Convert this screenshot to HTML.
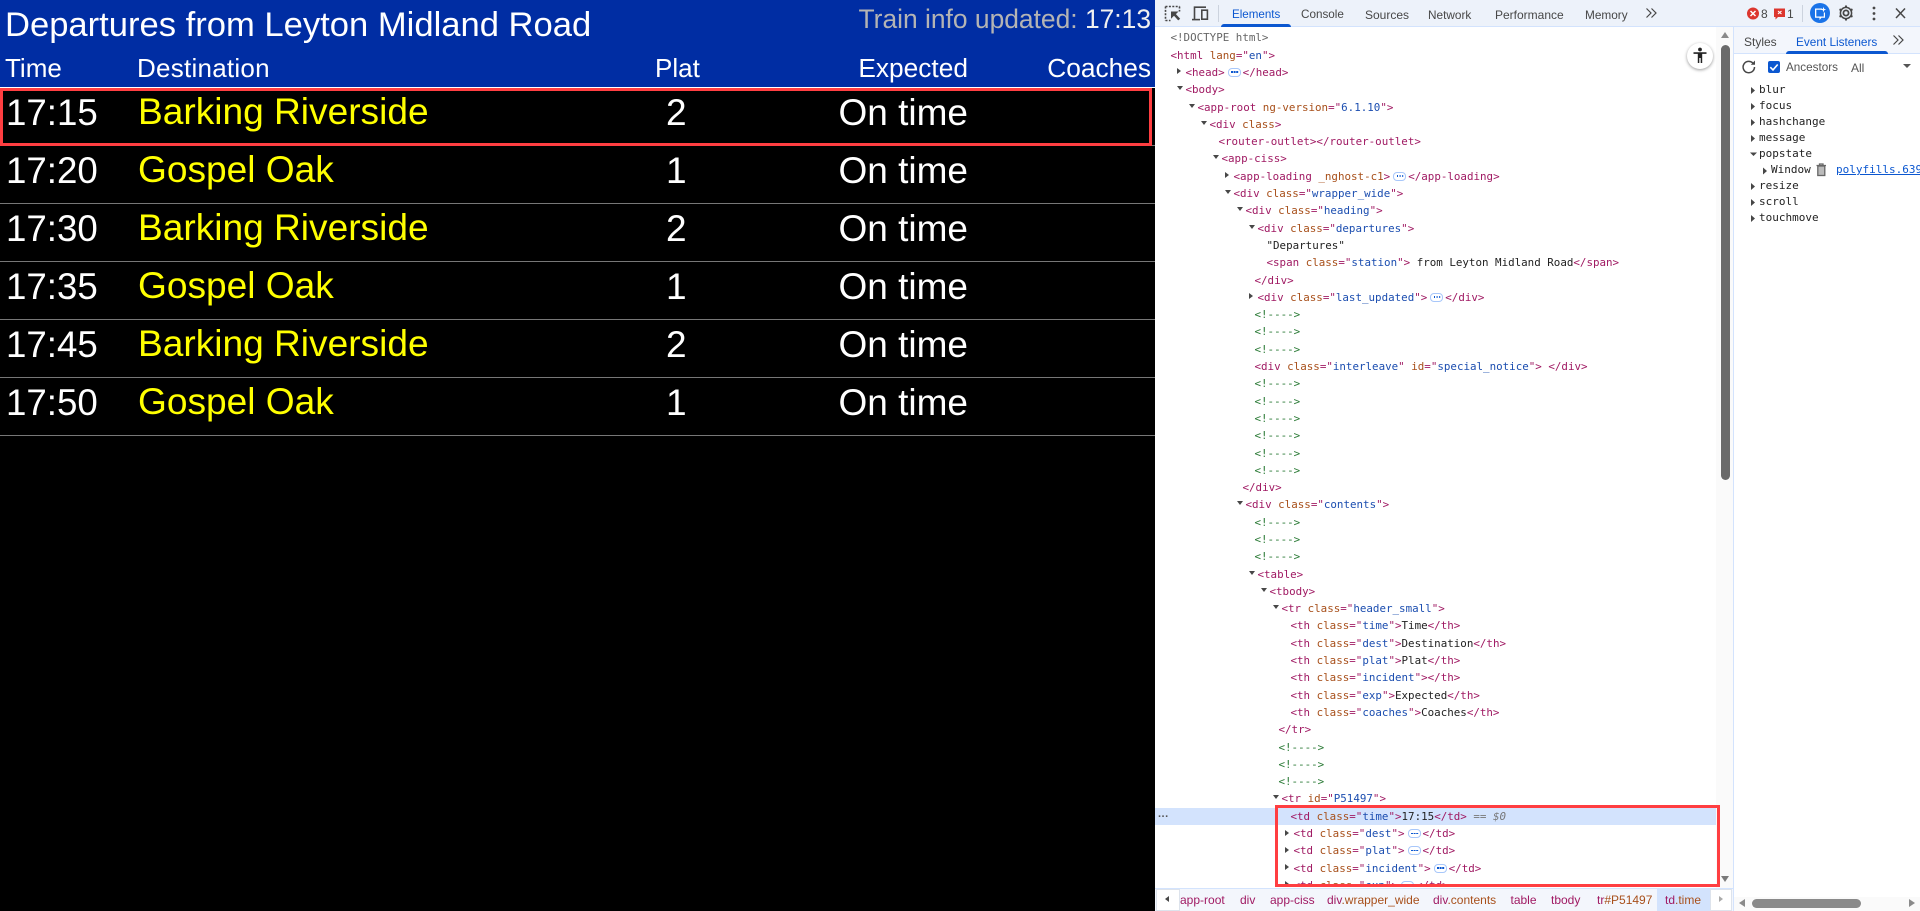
<!DOCTYPE html>
<html lang="en"><head><meta charset="utf-8"><title>Departures</title>
<style>
html,body{margin:0;padding:0;width:1920px;height:911px;overflow:hidden;background:#000}
body{position:relative;font-family:"Liberation Sans",sans-serif}
.abs,.s{position:absolute;white-space:nowrap}
.s{line-height:0}
.hdr{position:absolute;left:0;top:0;width:1155px;height:87px;background:#002da3;border-bottom:1px solid #fff}
.row{position:absolute;left:0;width:1155px;height:57px;border-bottom:1px solid #777}
.tm{left:6px;top:25px;font-size:36.7px;color:#fff}
.ds{left:138px;top:23px;font-size:37.1px;color:#ff0}
.pl{left:666px;top:25px;font-size:37px;color:#fff}
.ex{right:187px;top:25px;font-size:37px;color:#fff}
#dev{position:absolute;left:1155px;top:0;width:765px;height:911px;background:#fff;overflow:hidden}
.tb{position:absolute;left:1155px;top:0;width:765px;height:26px;background:#edf2fa;border-bottom:1px solid #d3e3fd}
.tab{position:absolute;font-size:12px;color:#474747;line-height:14px;white-space:nowrap}
#el{position:absolute;left:1155px;top:27px;width:578px;height:858px;overflow:hidden;background:#fff}
#in{position:absolute;left:-1155px;top:2.4px;width:1733px;font:10.85px/17.3px "DejaVu Sans Mono",monospace;color:#222}
.l{position:relative;height:17.3px;white-space:pre}
.t{color:#a01a63}.a{color:#a8501b}.v{color:#1c4eb0}.c{color:#2a7a35}.g{color:#666}.z{color:#777;font-style:italic}
.d,.r{position:absolute;width:0;height:0}
.d{left:-9px;top:5px;border-left:3.5px solid transparent;border-right:3.5px solid transparent;border-top:4.5px solid #474747}
.r{left:-8.5px;top:4.5px;border-top:3.5px solid transparent;border-bottom:3.5px solid transparent;border-left:4.5px solid #474747}
.e{display:inline-block;box-sizing:border-box;width:13px;height:9px;margin:0 2px 0 3px;border:1px solid #a8c7fa;border-radius:4px;vertical-align:-1px;position:relative;background:#fff}
.e:after{content:"";position:absolute;left:2.5px;top:2.5px;width:1.6px;height:1.6px;background:#0b57d0;box-shadow:2.6px 0 #0b57d0,5.2px 0 #0b57d0}
.m{position:absolute;font:11px/16px "DejaVu Sans Mono",monospace;color:#222;white-space:nowrap}
.bc{position:absolute;top:893px;font-size:12px;line-height:14px;white-space:nowrap;color:#a01a63}
.bc span{color:#a8501b}
</style></head><body>

<div class="hdr"></div>
<div class="s" style="left:5px;top:24.500px;font-size:34.6px;color:#fff">Departures from Leyton Midland Road</div>
<div class="s" style="right:769px;top:19px;font-size:26.4px;color:#b4b4b4">Train info updated: <span style="color:#f0f0f0">17:13</span></div>
<div class="s" style="left:5px;top:68px;font-size:26px;color:#fff">Time</div>
<div class="s" style="left:137px;top:68px;font-size:26px;letter-spacing:.25px;color:#fff">Destination</div>
<div class="s" style="left:655px;top:68px;font-size:26px;color:#fff">Plat</div>
<div class="s" style="right:952px;top:68px;font-size:26.3px;color:#fff">Expected</div>
<div class="s" style="right:769px;top:68px;font-size:26.3px;color:#fff">Coaches</div>

<div class="row" style="top:88px"><div class="s tm">17:15</div><div class="s ds">Barking Riverside</div><div class="s pl">2</div><div class="s ex">On time</div></div>
<div class="row" style="top:146px"><div class="s tm">17:20</div><div class="s ds">Gospel Oak</div><div class="s pl">1</div><div class="s ex">On time</div></div>
<div class="row" style="top:204px"><div class="s tm">17:30</div><div class="s ds">Barking Riverside</div><div class="s pl">2</div><div class="s ex">On time</div></div>
<div class="row" style="top:262px"><div class="s tm">17:35</div><div class="s ds">Gospel Oak</div><div class="s pl">1</div><div class="s ex">On time</div></div>
<div class="row" style="top:320px"><div class="s tm">17:45</div><div class="s ds">Barking Riverside</div><div class="s pl">2</div><div class="s ex">On time</div></div>
<div class="row" style="top:378px"><div class="s tm">17:50</div><div class="s ds">Gospel Oak</div><div class="s pl">1</div><div class="s ex">On time</div></div>
<div class="abs" style="left:0;top:88px;width:1152px;height:58px;box-sizing:border-box;border:3px solid #ff3e41"></div>

<div id="dev"></div>
<div class="tb"></div>
<svg class="abs" style="left:1155px;top:0" width="70" height="27" viewBox="0 0 70 27" fill="none">
<path d="M10.5 6.5h14M10.5 6.5v14M10.5 20.5h5M24.5 6.5v5" stroke="#474747" stroke-width="1.6" stroke-dasharray="2 1.4"/>
<path d="M16 11.5h7.5l-2.6 2.6 4.3 4.6-2 1.7-4.2-4.6-3 2.9z" fill="#474747"/>
<path d="M39.5 19V7.2h11.5" stroke="#474747" stroke-width="1.6"/>
<path d="M37 19.6h8" stroke="#474747" stroke-width="1.6"/>
<rect x="46.8" y="10.2" width="5.6" height="9" stroke="#474747" stroke-width="1.6"/>
<path d="M63.5 5v17" stroke="#ccd3de"/>
</svg>
<div class="abs" style="left:1221px;top:24px;width:70px;height:3px;background:#0b57d0;border-radius:3px 3px 0 0"></div>
<div class="tab" style="left:1232px;top:8px;color:#0b57d0;font-size:11.6px">Elements</div>
<div class="tab" style="left:1301px;top:8px;font-size:11.7px">Console</div>
<div class="tab" style="left:1365px;top:8px">Sources</div>
<div class="tab" style="left:1428px;top:8px;font-size:11.8px">Network</div>
<div class="tab" style="left:1495px;top:8px">Performance</div>
<div class="tab" style="left:1585px;top:8px;font-size:11.8px">Memory</div>
<svg class="abs" style="left:1645px;top:7px" width="13" height="12" fill="none" stroke="#474747" stroke-width="1.2"><path d="M1.5 1.5L6 6l-4.500 4.500M6.500 1.500L11 6l-4.500 4.500"/></svg>

<svg class="abs" style="left:1745px;top:6px" width="16" height="16"><circle cx="8" cy="7.500" r="6" fill="#dc362e"/><path d="M5.500 5l5 5M10.500 5l-5 5" stroke="#fff" stroke-width="1.500"/></svg>
<div class="tab" style="left:1761px;top:7px">8</div>
<svg class="abs" style="left:1773px;top:7px" width="14" height="14"><path d="M1 1.500h11v8.500H5l-2.500 2.500V10H1z" fill="#dc362e"/><path d="M5 4l3.500 3M8.500 4L5 7" stroke="#fff" stroke-width="1.100"/></svg>
<div class="tab" style="left:1787px;top:7px">1</div>
<div class="abs" style="left:1802px;top:5px;width:1px;height:17px;background:#ccd3de"></div>
<svg class="abs" style="left:1810px;top:3px" width="20" height="20"><circle cx="10" cy="10" r="10" fill="#1a73e8"/><path d="M6 5.500h6v1.200H6.300v6.800h7.500V9.500H15v5.200h-3.500L9.500 17v-2.300H5V5.500z" fill="#fff"/><path d="M13.500 4l.7 1.900 1.900.7-1.900.7-.7 1.900-.7-1.900-1.900-.7 1.900-.7z" fill="#fff"/></svg>
<svg class="abs" style="left:1838px;top:5px" width="16" height="16" viewBox="0 0 16 16"><circle cx="8" cy="8" r="2.600" fill="none" stroke="#474747" stroke-width="1.800"/><circle cx="8" cy="8" r="5.600" fill="none" stroke="#474747" stroke-width="1.500"/><path d="M8 .5v2.200M8 13.300v2.200M1.500 4.200l1.900 1.100M12.600 10.700l1.900 1.100M1.500 11.800l1.900-1.100M12.600 5.300l1.900-1.100" stroke="#474747" stroke-width="2"/></svg>
<svg class="abs" style="left:1871px;top:6px" width="6" height="15"><circle cx="3" cy="2" r="1.400" fill="#474747"/><circle cx="3" cy="7.500" r="1.400" fill="#474747"/><circle cx="3" cy="13" r="1.400" fill="#474747"/></svg>
<svg class="abs" style="left:1895px;top:8px" width="12" height="11"><path d="M1 .5l9 9.500M10 .5l-9 9.500" stroke="#474747" stroke-width="1.500"/></svg>

<div id="el"><div id="in">
<div class="l g" style="margin-left:1170.5px">&lt;!DOCTYPE html&gt;</div>
<div class="l" style="margin-left:1170.5px"><span class="t">&lt;html</span> <span class="a">lang</span><span class="t">="</span><span class="v">en</span><span class="t">"&gt;</span></div>
<div class="l" style="margin-left:1185.5px"><i class="r"></i><span class="t">&lt;head&gt;</span><b class="e"></b><span class="t">&lt;/head&gt;</span></div>
<div class="l" style="margin-left:1185.5px"><i class="d"></i><span class="t">&lt;body&gt;</span></div>
<div class="l" style="margin-left:1197.5px"><i class="d"></i><span class="t">&lt;app-root</span> <span class="a">ng-version</span><span class="t">="</span><span class="v">6.1.10</span><span class="t">"&gt;</span></div>
<div class="l" style="margin-left:1209.5px"><i class="d"></i><span class="t">&lt;div</span> <span class="a">class</span><span class="t">&gt;</span></div>
<div class="l" style="margin-left:1218.5px"><span class="t">&lt;router-outlet&gt;&lt;/router-outlet&gt;</span></div>
<div class="l" style="margin-left:1221.5px"><i class="d"></i><span class="t">&lt;app-ciss&gt;</span></div>
<div class="l" style="margin-left:1233.5px"><i class="r"></i><span class="t">&lt;app-loading</span> <span class="a">_nghost-c1</span><span class="t">&gt;</span><b class="e"></b><span class="t">&lt;/app-loading&gt;</span></div>
<div class="l" style="margin-left:1233.5px"><i class="d"></i><span class="t">&lt;div</span> <span class="a">class</span><span class="t">="</span><span class="v">wrapper_wide</span><span class="t">"&gt;</span></div>
<div class="l" style="margin-left:1245.5px"><i class="d"></i><span class="t">&lt;div</span> <span class="a">class</span><span class="t">="</span><span class="v">heading</span><span class="t">"&gt;</span></div>
<div class="l" style="margin-left:1257.5px"><i class="d"></i><span class="t">&lt;div</span> <span class="a">class</span><span class="t">="</span><span class="v">departures</span><span class="t">"&gt;</span></div>
<div class="l" style="margin-left:1266.5px">"Departures"</div>
<div class="l" style="margin-left:1266.5px"><span class="t">&lt;span</span> <span class="a">class</span><span class="t">="</span><span class="v">station</span><span class="t">"&gt;</span> from Leyton Midland Road<span class="t">&lt;/span&gt;</span></div>
<div class="l" style="margin-left:1254.5px"><span class="t">&lt;/div&gt;</span></div>
<div class="l" style="margin-left:1257.5px"><i class="r"></i><span class="t">&lt;div</span> <span class="a">class</span><span class="t">="</span><span class="v">last_updated</span><span class="t">"&gt;</span><b class="e"></b><span class="t">&lt;/div&gt;</span></div>
<div class="l c" style="margin-left:1254.5px">&lt;!----&gt;</div>
<div class="l c" style="margin-left:1254.5px">&lt;!----&gt;</div>
<div class="l c" style="margin-left:1254.5px">&lt;!----&gt;</div>
<div class="l" style="margin-left:1254.5px"><span class="t">&lt;div</span> <span class="a">class</span><span class="t">="</span><span class="v">interleave</span><span class="t">"</span> <span class="a">id</span><span class="t">="</span><span class="v">special_notice</span><span class="t">"&gt;</span> <span class="t">&lt;/div&gt;</span></div>
<div class="l c" style="margin-left:1254.5px">&lt;!----&gt;</div>
<div class="l c" style="margin-left:1254.5px">&lt;!----&gt;</div>
<div class="l c" style="margin-left:1254.5px">&lt;!----&gt;</div>
<div class="l c" style="margin-left:1254.5px">&lt;!----&gt;</div>
<div class="l c" style="margin-left:1254.5px">&lt;!----&gt;</div>
<div class="l c" style="margin-left:1254.5px">&lt;!----&gt;</div>
<div class="l" style="margin-left:1242.5px"><span class="t">&lt;/div&gt;</span></div>
<div class="l" style="margin-left:1245.5px"><i class="d"></i><span class="t">&lt;div</span> <span class="a">class</span><span class="t">="</span><span class="v">contents</span><span class="t">"&gt;</span></div>
<div class="l c" style="margin-left:1254.5px">&lt;!----&gt;</div>
<div class="l c" style="margin-left:1254.5px">&lt;!----&gt;</div>
<div class="l c" style="margin-left:1254.5px">&lt;!----&gt;</div>
<div class="l" style="margin-left:1257.5px"><i class="d"></i><span class="t">&lt;table&gt;</span></div>
<div class="l" style="margin-left:1269.5px"><i class="d"></i><span class="t">&lt;tbody&gt;</span></div>
<div class="l" style="margin-left:1281.500px"><i class="d"></i><span class="t">&lt;tr</span> <span class="a">class</span><span class="t">="</span><span class="v">header_small</span><span class="t">"&gt;</span></div>
<div class="l" style="margin-left:1290.5px"><span class="t">&lt;th</span> <span class="a">class</span><span class="t">="</span><span class="v">time</span><span class="t">"&gt;</span>Time<span class="t">&lt;/th&gt;</span></div>
<div class="l" style="margin-left:1290.5px"><span class="t">&lt;th</span> <span class="a">class</span><span class="t">="</span><span class="v">dest</span><span class="t">"&gt;</span>Destination<span class="t">&lt;/th&gt;</span></div>
<div class="l" style="margin-left:1290.5px"><span class="t">&lt;th</span> <span class="a">class</span><span class="t">="</span><span class="v">plat</span><span class="t">"&gt;</span>Plat<span class="t">&lt;/th&gt;</span></div>
<div class="l" style="margin-left:1290.5px"><span class="t">&lt;th</span> <span class="a">class</span><span class="t">="</span><span class="v">incident</span><span class="t">"&gt;&lt;/th&gt;</span></div>
<div class="l" style="margin-left:1290.5px"><span class="t">&lt;th</span> <span class="a">class</span><span class="t">="</span><span class="v">exp</span><span class="t">"&gt;</span>Expected<span class="t">&lt;/th&gt;</span></div>
<div class="l" style="margin-left:1290.5px"><span class="t">&lt;th</span> <span class="a">class</span><span class="t">="</span><span class="v">coaches</span><span class="t">"&gt;</span>Coaches<span class="t">&lt;/th&gt;</span></div>
<div class="l" style="margin-left:1278.5px"><span class="t">&lt;/tr&gt;</span></div>
<div class="l c" style="margin-left:1278.5px">&lt;!----&gt;</div>
<div class="l c" style="margin-left:1278.5px">&lt;!----&gt;</div>
<div class="l c" style="margin-left:1278.5px">&lt;!----&gt;</div>
<div class="l" style="margin-left:1281.5px"><i class="d"></i><span class="t">&lt;tr</span> <span class="a">id</span><span class="t">="</span><span class="v">P51497</span><span class="t">"&gt;</span></div>
<div class="l" style="margin-left:1290.5px;z-index:2"><span class="t">&lt;td</span> <span class="a">class</span><span class="t">="</span><span class="v">time</span><span class="t">"&gt;</span>17:15<span class="t">&lt;/td&gt;</span> <span class="z">== $0</span></div>
<div class="l" style="margin-left:1293.5px"><i class="r"></i><span class="t">&lt;td</span> <span class="a">class</span><span class="t">="</span><span class="v">dest</span><span class="t">"&gt;</span><b class="e"></b><span class="t">&lt;/td&gt;</span></div>
<div class="l" style="margin-left:1293.5px"><i class="r"></i><span class="t">&lt;td</span> <span class="a">class</span><span class="t">="</span><span class="v">plat</span><span class="t">"&gt;</span><b class="e"></b><span class="t">&lt;/td&gt;</span></div>
<div class="l" style="margin-left:1293.5px"><i class="r"></i><span class="t">&lt;td</span> <span class="a">class</span><span class="t">="</span><span class="v">incident</span><span class="t">"&gt;</span><b class="e"></b><span class="t">&lt;/td&gt;</span></div>
<div class="l" style="margin-left:1293.5px"><i class="r"></i><span class="t">&lt;td</span> <span class="a">class</span><span class="t">="</span><span class="v">exp</span><span class="t">"&gt;</span><b class="e"></b><span class="t">&lt;/td&gt;</span></div>
</div>
<div class="abs" style="left:0;top:781px;width:561px;height:17px;background:#d3e3fd;mix-blend-mode:multiply"></div>
<div class="abs" style="left:3px;top:779px;font:bold 11px/17px 'Liberation Sans',sans-serif;color:#555;letter-spacing:.5px">...</div>
</div>

<!-- main scrollbar -->
<div class="abs" style="left:1716px;top:27px;width:17px;height:861px;background:#fafafa"></div>
<div class="abs" style="left:1721px;top:45px;width:9px;height:435px;background:#6a6a6a;border-radius:5px"></div>
<div class="abs" style="left:1721px;top:32px;width:0;height:0;border-left:4.5px solid transparent;border-right:4.5px solid transparent;border-bottom:6px solid #8a8a8a"></div>
<div class="abs" style="left:1721px;top:876px;width:0;height:0;border-left:4.5px solid transparent;border-right:4.5px solid transparent;border-top:6px solid #7a7a7a"></div>
<!-- accessibility -->
<div class="abs" style="left:1687px;top:43px;width:26px;height:26px;background:#fff;border-radius:50%;box-shadow:0 1px 3px rgba(0,0,0,.4)"></div>
<svg class="abs" style="left:1691px;top:47px" width="18" height="18"><circle cx="9" cy="2.500" r="1.900" fill="#222"/><path d="M2.500 5.300h13v1.600h-4.300V16H9.700v-5H8.300v5H6.800V6.900H2.500z" fill="#222"/></svg>

<!-- red box in devtools -->
<div class="abs" style="left:1275px;top:805px;width:445px;height:82px;box-sizing:border-box;border:3px solid #ff3e41"></div>

<!-- breadcrumbs -->
<div class="abs" style="left:1155px;top:888px;width:578px;height:23px;background:#f3f6fc;border-top:1px solid #d3e3fd;box-sizing:border-box"></div>
<div class="abs" style="left:1156px;top:889px;width:24px;height:22px;background:#fff;border:1px solid #dde3ec;box-sizing:border-box"></div>
<div class="abs" style="left:1165px;top:896px;width:0;height:0;border-top:3.5px solid transparent;border-bottom:3.5px solid transparent;border-right:4.5px solid #474747"></div>
<div class="abs" style="left:1657px;top:889px;width:53px;height:22px;background:#d3e3fd"></div>
<div class="abs" style="left:1710px;top:889px;width:22px;height:22px;background:#fff;border:1px solid #dde3ec;box-sizing:border-box"></div>
<div class="abs" style="left:1719px;top:896px;width:0;height:0;border-top:3.5px solid transparent;border-bottom:3.5px solid transparent;border-left:4.5px solid #aaa"></div>
<div class="bc" style="left:1180px">app-root</div>
<div class="bc" style="left:1240px">div</div>
<div class="bc" style="left:1270px">app-ciss</div>
<div class="bc" style="left:1327px">div<span>.wrapper_wide</span></div>
<div class="bc" style="left:1433px">div<span>.contents</span></div>
<div class="bc" style="left:1510.5px">table</div>
<div class="bc" style="left:1551px">tbody</div>
<div class="bc" style="left:1597px">tr<span>#P51497</span></div>
<div class="bc" style="left:1665px">td<span>.time</span></div>

<!-- sidebar -->
<div class="abs" style="left:1733px;top:27px;width:1px;height:884px;background:#d3e3fd"></div>
<div class="abs" style="left:1734px;top:27px;width:186px;height:26px;background:#f3f6fc;border-bottom:1px solid #d3e3fd"></div>
<div class="abs" style="left:1786px;top:51px;width:102px;height:3px;background:#0b57d0;border-radius:3px 3px 0 0"></div>
<div class="tab" style="left:1744px;top:35px">Styles</div>
<div class="tab" style="left:1796px;top:35px;color:#0b57d0;font-size:11.8px">Event Listeners</div>
<svg class="abs" style="left:1892px;top:34px" width="13" height="12" fill="none" stroke="#474747" stroke-width="1.2"><path d="M1.500 1.500L6 6l-4.500 4.500M6.500 1.500L11 6l-4.500 4.500"/></svg>
<svg class="abs" style="left:1741px;top:59px" width="16" height="16" fill="none" stroke="#474747" stroke-width="1.500"><path d="M13.500 8a5.700 5.700 0 1 1-1.700-4"/><path d="M14 1.500v4.200H9.800z" fill="#474747" stroke="none"/></svg>
<div class="abs" style="left:1768px;top:61px;width:12px;height:12px;background:#0b57d0;border-radius:2px"></div>
<svg class="abs" style="left:1768px;top:61px" width="12" height="12" fill="none"><path d="M2.300 6.200l2.700 2.700 4.700-5.400" stroke="#fff" stroke-width="1.600"/></svg>
<div class="tab" style="left:1786px;top:61px;color:#555;font-size:11.7px">Ancestors</div>
<div class="tab" style="left:1851px;top:61px;color:#555">All</div>
<div class="abs" style="left:1903px;top:64px;width:0;height:0;border-left:4px solid transparent;border-right:4px solid transparent;border-top:4px solid #555"></div>
<div class="m" style="left:1759px;top:82px">blur</div>
<div class="m" style="left:1759px;top:98px">focus</div>
<div class="m" style="left:1759px;top:114px">hashchange</div>
<div class="m" style="left:1759px;top:130px">message</div>
<div class="m" style="left:1759px;top:146px">popstate</div>
<div class="m" style="left:1771px;top:162px">Window</div>
<div class="m" style="left:1836px;top:162px;color:#0b57d0;text-decoration:underline;width:84px;overflow:hidden">polyfills.639</div>
<div class="m" style="left:1759px;top:178px">resize</div>
<div class="m" style="left:1759px;top:194px">scroll</div>
<div class="m" style="left:1759px;top:210px">touchmove</div>
<svg class="abs" style="left:1750px;top:84px" width="30" height="140" fill="#474747">
<path d="M1 3l4 3.500-4 3.500zM1 19l4 3.500-4 3.500zM1 35l4 3.500-4 3.500zM1 51l4 3.500-4 3.500zM0 68.500h7l-3.500 3.500zM13 83.500l4 3.500-4 3.500zM1 99l4 3.500-4 3.500zM1 115l4 3.500-4 3.500zM1 131l4 3.500-4 3.500z"/>
</svg>
<svg class="abs" style="left:1816px;top:163px" width="11" height="14" fill="none" stroke="#666" stroke-width="1.300"><path d="M.5 2.500h9.500M3.500 2.500V1h3.500v1.500"/><rect x="1.800" y="3" width="7" height="9.500" fill="#bbb"/></svg>

<!-- sidebar horizontal scrollbar -->
<div class="abs" style="left:1734px;top:897px;width:186px;height:14px;background:#fafafa"></div>
<div class="abs" style="left:1752px;top:899px;width:109px;height:9px;background:#8a8a8a;border-radius:5px"></div>
<div class="abs" style="left:1739px;top:899px;width:0;height:0;border-top:4.5px solid transparent;border-bottom:4.5px solid transparent;border-right:6px solid #8a8a8a"></div>
<div class="abs" style="left:1909px;top:899px;width:0;height:0;border-top:4.5px solid transparent;border-bottom:4.5px solid transparent;border-left:6px solid #8a8a8a"></div>
</body></html>
